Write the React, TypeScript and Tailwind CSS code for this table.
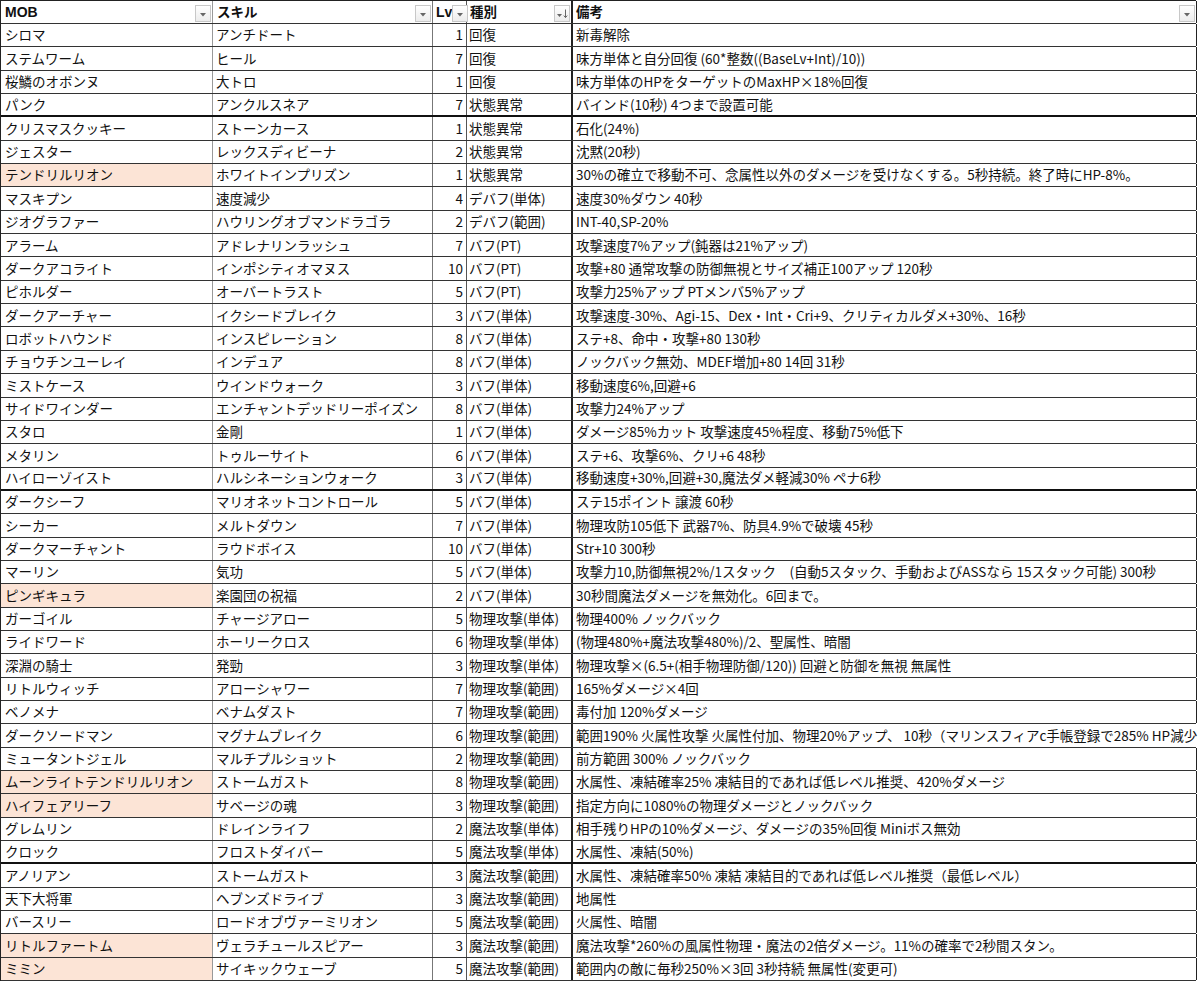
import React from 'react';

type Row = {
  mob: string;
  skill: string;
  lv: number;
  kind: string;
  note: string;
  mark?: boolean;
  thick?: boolean;
  overflow?: boolean;
};

const ROWS: Row[] = [
  { mob: 'シロマ', skill: 'アンチドート', lv: 1, kind: '回復', note: '新毒解除' },
  { mob: 'ステムワーム', skill: 'ヒール', lv: 7, kind: '回復', note: '味方単体と自分回復 (60*整数((BaseLv+Int)/10))' },
  { mob: '桜鱗のオボンヌ', skill: '大トロ', lv: 1, kind: '回復', note: '味方単体のHPをターゲットのMaxHP×18%回復' },
  { mob: 'パンク', skill: 'アンクルスネア', lv: 7, kind: '状態異常', note: 'バインド(10秒) 4つまで設置可能', thick: true },
  { mob: 'クリスマスクッキー', skill: 'ストーンカース', lv: 1, kind: '状態異常', note: '石化(24%)' },
  { mob: 'ジェスター', skill: 'レックスディビーナ', lv: 2, kind: '状態異常', note: '沈黙(20秒)' },
  { mob: 'テンドリルリオン', skill: 'ホワイトインプリズン', lv: 1, kind: '状態異常', note: '30%の確立で移動不可、念属性以外のダメージを受けなくする。5秒持続。終了時にHP-8%。', mark: true },
  { mob: 'マスキプン', skill: '速度減少', lv: 4, kind: 'デバフ(単体)', note: '速度30%ダウン 40秒' },
  { mob: 'ジオグラファー', skill: 'ハウリングオブマンドラゴラ', lv: 2, kind: 'デバフ(範囲)', note: 'INT-40,SP-20%' },
  { mob: 'アラーム', skill: 'アドレナリンラッシュ', lv: 7, kind: 'バフ(PT)', note: '攻撃速度7%アップ(鈍器は21%アップ)' },
  { mob: 'ダークアコライト', skill: 'インポシティオマヌス', lv: 10, kind: 'バフ(PT)', note: '攻撃+80 通常攻撃の防御無視とサイズ補正100アップ 120秒' },
  { mob: 'ピホルダー', skill: 'オーバートラスト', lv: 5, kind: 'バフ(PT)', note: '攻撃力25%アップ PTメンバ5%アップ' },
  { mob: 'ダークアーチャー', skill: 'イクシードブレイク', lv: 3, kind: 'バフ(単体)', note: '攻撃速度-30%、Agi-15、Dex・Int・Cri+9、クリティカルダメ+30%、16秒' },
  { mob: 'ロボットハウンド', skill: 'インスピレーション', lv: 8, kind: 'バフ(単体)', note: 'ステ+8、命中・攻撃+80 130秒' },
  { mob: 'チョウチンユーレイ', skill: 'インデュア', lv: 8, kind: 'バフ(単体)', note: 'ノックバック無効、MDEF増加+80 14回 31秒' },
  { mob: 'ミストケース', skill: 'ウインドウォーク', lv: 3, kind: 'バフ(単体)', note: '移動速度6%,回避+6' },
  { mob: 'サイドワインダー', skill: 'エンチャントデッドリーポイズン', lv: 8, kind: 'バフ(単体)', note: '攻撃力24%アップ' },
  { mob: 'スタロ', skill: '金剛', lv: 1, kind: 'バフ(単体)', note: 'ダメージ85%カット 攻撃速度45%程度、移動75%低下' },
  { mob: 'メタリン', skill: 'トゥルーサイト', lv: 6, kind: 'バフ(単体)', note: 'ステ+6、攻撃6%、クリ+6 48秒' },
  { mob: 'ハイローゾイスト', skill: 'ハルシネーションウォーク', lv: 3, kind: 'バフ(単体)', note: '移動速度+30%,回避+30,魔法ダメ軽減30% ペナ6秒', thick: true },
  { mob: 'ダークシーフ', skill: 'マリオネットコントロール', lv: 5, kind: 'バフ(単体)', note: 'ステ15ポイント 譲渡 60秒' },
  { mob: 'シーカー', skill: 'メルトダウン', lv: 7, kind: 'バフ(単体)', note: '物理攻防105低下 武器7%、防具4.9%で破壊 45秒' },
  { mob: 'ダークマーチャント', skill: 'ラウドボイス', lv: 10, kind: 'バフ(単体)', note: 'Str+10 300秒' },
  { mob: 'マーリン', skill: '気功', lv: 5, kind: 'バフ(単体)', note: '攻撃力10,防御無視2%/1スタック　(自動5スタック、手動およびASSなら 15スタック可能) 300秒' },
  { mob: 'ピンギキュラ', skill: '楽園団の祝福', lv: 2, kind: 'バフ(単体)', note: '30秒間魔法ダメージを無効化。6回まで。', mark: true },
  { mob: 'ガーゴイル', skill: 'チャージアロー', lv: 5, kind: '物理攻撃(単体)', note: '物理400% ノックバック' },
  { mob: 'ライドワード', skill: 'ホーリークロス', lv: 6, kind: '物理攻撃(単体)', note: '(物理480%+魔法攻撃480%)/2、聖属性、暗闇' },
  { mob: '深淵の騎士', skill: '発勁', lv: 3, kind: '物理攻撃(単体)', note: '物理攻撃×(6.5+(相手物理防御/120)) 回避と防御を無視 無属性' },
  { mob: 'リトルウィッチ', skill: 'アローシャワー', lv: 7, kind: '物理攻撃(範囲)', note: '165%ダメージ×4回' },
  { mob: 'ベノメナ', skill: 'ベナムダスト', lv: 7, kind: '物理攻撃(範囲)', note: '毒付加 120%ダメージ' },
  { mob: 'ダークソードマン', skill: 'マグナムブレイク', lv: 6, kind: '物理攻撃(範囲)', note: '範囲190% 火属性攻撃  火属性付加、物理20%アップ、 10秒（マリンスフィアc手帳登録で285% HP減少', overflow: true },
  { mob: 'ミュータントジェル', skill: 'マルチプルショット', lv: 2, kind: '物理攻撃(範囲)', note: '前方範囲 300% ノックバック' },
  { mob: 'ムーンライトテンドリルリオン', skill: 'ストームガスト', lv: 8, kind: '物理攻撃(範囲)', note: '水属性、凍結確率25% 凍結目的であれば低レベル推奨、420%ダメージ', mark: true },
  { mob: 'ハイフェアリーフ', skill: 'サベージの魂', lv: 3, kind: '物理攻撃(範囲)', note: '指定方向に1080%の物理ダメージとノックバック', mark: true },
  { mob: 'グレムリン', skill: 'ドレインライフ', lv: 2, kind: '魔法攻撃(単体)', note: '相手残りHPの10%ダメージ、ダメージの35%回復 Miniボス無効' },
  { mob: 'クロック', skill: 'フロストダイバー', lv: 5, kind: '魔法攻撃(単体)', note: '水属性、凍結(50%)', thick: true },
  { mob: 'アノリアン', skill: 'ストームガスト', lv: 3, kind: '魔法攻撃(範囲)', note: '水属性、凍結確率50% 凍結 凍結目的であれば低レベル推奨（最低レベル）' },
  { mob: '天下大将軍', skill: 'ヘブンズドライブ', lv: 3, kind: '魔法攻撃(範囲)', note: '地属性' },
  { mob: 'バースリー', skill: 'ロードオブヴァーミリオン', lv: 5, kind: '魔法攻撃(範囲)', note: '火属性、暗闇' },
  { mob: 'リトルファートム', skill: 'ヴェラチュールスピアー', lv: 3, kind: '魔法攻撃(範囲)', note: '魔法攻撃*260%の風属性物理・魔法の2倍ダメージ。11%の確率で2秒間スタン。', mark: true },
  { mob: 'ミミン', skill: 'サイキックウェーブ', lv: 5, kind: '魔法攻撃(範囲)', note: '範囲内の敵に毎秒250%×3回 3秒持続 無属性(変更可)', mark: true },
];

const FONT = { fontFamily: '"Noto Sans CJK JP", "Noto Sans", sans-serif' };

export default function App() {
  return (
    <div className="h-[983px] w-[1200px] overflow-hidden bg-white text-[13.5px] leading-none text-[#111]" style={FONT}>
      <div className="w-[1196px] border-t border-l border-[#222]">
        <HeaderRow />
        {ROWS.map((r) => (
          <DataRow key={r.mob + r.skill} row={r} />
        ))}
      </div>
    </div>
  );
}

function HeaderRow() {
  return (
    <div className="flex h-[23px] border-b border-[#333] font-bold">
      <div className="flex w-[212px] shrink-0 items-center justify-between border-r border-[#999] pl-[4px] pr-[1px]">
        <span className="font-['Liberation_Sans'] text-[14px]">MOB</span>
        <FilterButton />
      </div>
      <div className="flex w-[220px] shrink-0 items-center justify-between border-r border-[#777] pl-[4px] pr-[1px]">
        <span>スキル</span>
        <FilterButton />
      </div>
      <div className="flex w-[34px] shrink-0 items-center justify-between border-r border-[#555] pl-[3px] pr-[1px]">
        <span className="font-['Liberation_Sans'] text-[14px]">Lv</span>
        <FilterButton />
      </div>
      <div className="flex w-[106px] shrink-0 items-center justify-between border-r-2 border-[#222] pl-[3px] pr-[1px]">
        <span>種別</span>
        <FilterButton sorted />
      </div>
      <div className="flex w-[624px] shrink-0 items-center justify-between border-r border-[#222] pl-[3px] pr-[1px]">
        <span>備考</span>
        <FilterButton />
      </div>
    </div>
  );
}

function FilterButton({ sorted }: { sorted?: boolean }) {
  return (
    <span className="mt-[3px] flex h-[17px] w-[16px] items-center justify-center border border-[#c8c8c8] bg-gradient-to-b from-white to-[#ececec]">
      <svg viewBox="0 0 14 14" className="h-[14px] w-[14px]" aria-hidden="true">
        {sorted ? (
          <>
            <polygon points="2,7 7,7 4.5,10" fill="#666" />
            <line x1="10.5" y1="2.5" x2="10.5" y2="10.5" stroke="#666" strokeWidth="1" />
            <polyline points="8.8,8.6 10.5,10.6 12.2,8.6" fill="none" stroke="#666" strokeWidth="1" />
          </>
        ) : (
          <polygon points="4,6 10,6 7,9.5" fill="#666" />
        )}
      </svg>
    </span>
  );
}

function DataRow({ row }: { row: Row }) {
  const bottom = row.thick ? 'border-b-2 border-[#111]' : 'border-b border-[#333]';
  return (
    <div className={`flex h-[23.35px] ${bottom}`}>
      <div className={`flex w-[212px] shrink-0 items-center border-r border-[#999] pl-[4px] ${row.mark ? 'bg-[#fce4d6]' : ''}`}>
        <span className="whitespace-nowrap">{row.mob}</span>
      </div>
      <div className="flex w-[220px] shrink-0 items-center border-r border-[#777] pl-[3px]">
        <span className="whitespace-nowrap">{row.skill}</span>
      </div>
      <div className="flex w-[34px] shrink-0 items-center justify-end border-r border-[#555] pr-[3px]">
        {row.lv}
      </div>
      <div className="flex w-[106px] shrink-0 items-center border-r-2 border-[#222] pl-[2px]">
        <span className="whitespace-nowrap">{row.kind}</span>
      </div>
      <div className={`flex w-[624px] shrink-0 items-center pl-[3px] ${row.overflow ? '' : 'border-r border-[#222]'}`}>
        <span className="whitespace-nowrap">{row.note}</span>
      </div>
    </div>
  );
}
